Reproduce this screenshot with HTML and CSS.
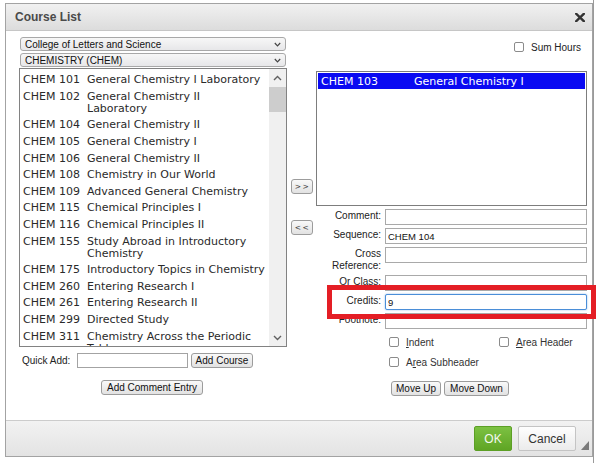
FILE: index.html
```html
<!DOCTYPE html>
<html>
<head>
<meta charset="utf-8">
<title>Course List</title>
<link rel="stylesheet" href="styles.css">
</head>
<body>
<div class="page">
  <div class="dialog">
    <div class="titlebar">
      <span class="title">Course List</span>
      <svg class="close" viewBox="0 0 10 9" width="10" height="9"><path d="M1.2 0.8 L8.8 8.2 M8.8 0.8 L1.2 8.2" stroke="#333" stroke-width="2.4" stroke-linecap="square"/></svg>
    </div>
    <div class="content">
      <div class="leftcol">
        <div class="select"><span>College of Letters and Science</span><svg class="chev" viewBox="0 0 7 5" width="7" height="5"><polyline points="0.8,1 3.5,3.8 6.2,1" fill="none" stroke="#444" stroke-width="1.2"/></svg></div>
        <div class="select"><span>CHEMISTRY (CHEM)</span><svg class="chev" viewBox="0 0 7 5" width="7" height="5"><polyline points="0.8,1 3.5,3.8 6.2,1" fill="none" stroke="#444" stroke-width="1.2"/></svg></div>
        <div class="listbox">
          <div class="items">
            <div class="item"><span class="code">CHEM 101</span><span class="name">General Chemistry I Laboratory</span></div>
            <div class="item"><span class="code">CHEM 102</span><span class="name">General Chemistry II<br>Laboratory</span></div>
            <div class="item"><span class="code">CHEM 104</span><span class="name">General Chemistry II</span></div>
            <div class="item"><span class="code">CHEM 105</span><span class="name">General Chemistry I</span></div>
            <div class="item"><span class="code">CHEM 106</span><span class="name">General Chemistry II</span></div>
            <div class="item"><span class="code">CHEM 108</span><span class="name">Chemistry in Our World</span></div>
            <div class="item"><span class="code">CHEM 109</span><span class="name">Advanced General Chemistry</span></div>
            <div class="item"><span class="code">CHEM 115</span><span class="name">Chemical Principles I</span></div>
            <div class="item"><span class="code">CHEM 116</span><span class="name">Chemical Principles II</span></div>
            <div class="item"><span class="code">CHEM 155</span><span class="name">Study Abroad in Introductory<br>Chemistry</span></div>
            <div class="item"><span class="code">CHEM 175</span><span class="name">Introductory Topics in Chemistry</span></div>
            <div class="item"><span class="code">CHEM 260</span><span class="name">Entering Research I</span></div>
            <div class="item"><span class="code">CHEM 261</span><span class="name">Entering Research II</span></div>
            <div class="item"><span class="code">CHEM 299</span><span class="name">Directed Study</span></div>
            <div class="item"><span class="code">CHEM 311</span><span class="name">Chemistry Across the Periodic<br>Table</span></div>
          </div>
          <div class="scrollbar">
            <div class="sb-btn"><svg viewBox="0 0 9 6" width="9" height="6"><polyline points="1,5 4.5,1.5 8,5" fill="none" stroke="#606060" stroke-width="1.4"/></svg></div>
            <div class="sb-thumb"></div>
            <div class="sb-space"></div>
            <div class="sb-btn"><svg viewBox="0 0 9 6" width="9" height="6"><polyline points="1,1 4.5,4.5 8,1" fill="none" stroke="#606060" stroke-width="1.4"/></svg></div>
          </div>
        </div>
        <div class="quickadd">
          <span class="qa-label">Quick Add:</span>
          <input class="qa-input" type="text">
          <button class="btn btn-addcourse">Add Course</button>
        </div>
        <button class="btn btn-comment">Add Comment Entry</button>
      </div>
      <div class="midcol">
        <button class="btn btn-move">&gt;&gt;</button>
        <button class="btn btn-move btn-back">&lt;&lt;</button>
      </div>
      <div class="rightcol">
        <div class="sumhours"><span class="box"></span><span>Sum Hours</span></div>
        <div class="rlist">
          <div class="ritem selected"><span class="rcode">CHEM 103</span><span>General Chemistry I</span></div>
        </div>
        <div class="form">
          <label class="lbl">Comment:</label><input class="inp" type="text">
          <label class="lbl">Sequence:</label><input class="inp" type="text" value="CHEM 104">
          <label class="lbl">Cross<br>Reference:</label><input class="inp" type="text">
          <label class="lbl">Or Class:</label><input class="inp" type="text">
          <label class="lbl">Credits:</label><input class="inp focus" type="text" value="9">
          <label class="lbl">Footnote:</label><input class="inp" type="text">
        </div>
        <div class="checks">
          <div class="chk"><span class="box"></span><span><u>I</u>ndent</span></div>
          <div class="chk"><span class="box"></span><span><u>A</u>rea Header</span></div>
          <div class="chk"><span class="box"></span><span>A<u>r</u>ea Subheader</span></div>
        </div>
        <div class="moves">
          <button class="btn btn-up">Move Up</button>
          <button class="btn btn-down">Move Down</button>
        </div>
      </div>
    </div>
    <div class="footer">
      <button class="ok">OK</button>
      <button class="cancel">Cancel</button>
      <span class="grip"></span>
    </div>
  </div>
  <div class="bg-edge"></div>
</div>
<div class="highlight"></div>
</body>
</html>
```

FILE: styles.css
```css
* { box-sizing: border-box; }
html, body { margin: 0; padding: 0; }
body {
  width: 598px; height: 463px; overflow: hidden; position: relative;
  background: #fff;
  font-family: "Liberation Sans", Arial, sans-serif; font-size: 10px; color: #222;
}
.page { display: flex; align-items: flex-start; padding: 3px 0 0 5px; height: 463px; }
.dialog {
  width: 588px; height: 454px; flex: none;
  border: 1px solid #a3a3a3; background: #fff;
  display: flex; flex-direction: column;
}
.bg-edge { width: 1px; align-self: stretch; background: #9a9a9a; margin-top: -3px; }

.titlebar {
  height: 27px; flex: none;
  border-bottom: 1px solid #c6c6c6;
  background: linear-gradient(#f1f1f1, #dcdcdc);
  display: flex; align-items: center; justify-content: space-between;
  padding: 0 7px 0 9px;
}
.title { font-size: 12px; font-weight: bold; color: #4a4a4a; }
.close { display: block; }

.content {
  flex: 1;
  display: grid; grid-template-columns: 268px 29px 271px;
  align-items: start;
  padding: 6px 4px 0 13px;
}

/* left column */
.leftcol { display: flex; flex-direction: column; align-items: flex-start; }
.select {
  width: 266px; height: 14px; margin-left: 1px;
  border: 1px solid #a8a8a8; border-radius: 3px;
  background: linear-gradient(#f7f7f7, #e7e7e9);
  display: flex; align-items: center; justify-content: space-between;
  padding: 0 4px 0 4px; font-size: 10px; color: #111;
}
.select + .select { margin-top: 2px; }
.chev { display: block; }
.listbox {
  margin-top: 1px; width: 268px; height: 279px;
  border: 1px solid #828282; display: flex;
}
.items {
  flex: 1; overflow: hidden; padding: 3px 0 0 3px;
  font-family: "DejaVu Sans", Verdana, sans-serif; font-size: 11px; color: #2a2a2a;
}
.item { display: flex; padding: 2.3px 0; line-height: 12px; white-space: nowrap; }
.code { width: 64px; flex: none; }
.scrollbar { width: 17px; flex: none; background: #f0f0f0; display: flex; flex-direction: column; }
.sb-btn { height: 17px; display: flex; align-items: center; justify-content: center; }
.sb-btn svg { display: block; }
.sb-thumb { height: 25px; margin: 1px 0 0; background: #cdcdcd; }
.sb-space { flex: 1; }

.btn {
  font-family: "Liberation Sans", Arial, sans-serif; font-size: 10px; color: #111;
  height: 15px; padding: 0; margin: 0;
  border: 1px solid #9c9c9c; border-radius: 3px;
  background: linear-gradient(#f9f9f9, #e2e2e2);
  display: inline-flex; align-items: center; justify-content: center;
  line-height: 1;
}
.quickadd { display: flex; align-items: center; margin-top: 6px; padding-left: 3px; height: 15px; }
.qa-label { width: 55px; }
.qa-input { width: 111px; height: 15px; border: 1px solid #a3a3a3; margin: 0; padding: 0 2px; font: 10px "Liberation Sans", Arial, sans-serif; }
.btn-addcourse { width: 62px; margin-left: 3px; }
.btn-comment { width: 102px; margin: 12px 0 0 82px; }

/* middle column */
.midcol { display: flex; flex-direction: column; align-items: flex-start; padding: 142px 0 0 4px; }
.btn-move { width: 22px; height: 15px; font-family: "DejaVu Sans", sans-serif; font-size: 7.5px; letter-spacing: 1.5px; color: #444; padding-left: 1px; }
.btn-back { margin-top: 26px; }

/* right column */
.rightcol { display: flex; flex-direction: column; }
.sumhours {
  display: flex; align-items: center; justify-content: flex-end; gap: 7px;
  height: 10px; margin-top: 5px; padding-right: 6px; font-size: 10px;
}
.box { width: 10px; height: 10px; flex: none; border: 1px solid #8b8b8b; border-radius: 2px; background: #fff; }
.rlist { margin-top: 19px; width: 271px; height: 135px; border: 1px solid #7d7d7d; padding: 1px; }
.ritem {
  display: flex; height: 16px; align-items: center; padding-left: 3px;
  font-family: "DejaVu Sans", Verdana, sans-serif; font-size: 11px; white-space: nowrap;
}
.selected { background: #0a0af2; color: #fff; }
.rcode { width: 93px; flex: none; }

.form {
  margin-top: 3px;
  display: grid; grid-template-columns: 65px 202px; column-gap: 4px; row-gap: 3px;
  align-items: start;
}
.lbl { text-align: right; line-height: 12px; padding-top: 1px; font-size: 10px; color: #222; }
.inp {
  height: 16px; width: 202px; margin: 0;
  border: 1px solid #a9a9a9; padding: 0 2px;
  font: 9.5px "Liberation Sans", Arial, sans-serif; color: #111; background: #fff;
}
.focus { border-color: #4a8ed8; border-radius: 2px; box-shadow: 0 0 2px #8cb8e8; outline: none; }

.checks {
  margin-top: 8px; padding-left: 73px;
  display: grid; grid-template-columns: 110px auto; row-gap: 10px;
}
.chk { display: flex; align-items: center; gap: 7px; height: 10px; font-size: 10px; color: #333; }
.chk u { text-decoration-thickness: 1px; text-underline-offset: 1px; }
.moves { display: flex; gap: 3px; margin-top: 14px; padding-left: 75px; }
.btn-up { width: 50px; }
.btn-down { width: 65px; }

/* footer */
.footer {
  height: 36px; flex: none; position: relative;
  border-top: 1px solid #cccccc;
  background: linear-gradient(#f2f2f2, #e3e3e3);
  display: flex; align-items: center; justify-content: flex-end; gap: 6px;
  padding: 0 16px 0 0;
}
.ok {
  width: 38px; height: 25px; margin: 0; padding: 0;
  border: 1px solid #5c9f25; border-radius: 2px;
  background: linear-gradient(#7cc142, #5fa524);
  color: #f4f9ef; font: 12px "Liberation Sans", Arial, sans-serif;
}
.cancel {
  width: 58px; height: 25px; margin: 0; padding: 0;
  border: 1px solid #c4c4c4; border-radius: 2px;
  background: linear-gradient(#fefefe, #ebebeb);
  color: #333; font: 12px "Liberation Sans", Arial, sans-serif;
}
.grip {
  position: absolute; right: 3px; bottom: 6px; width: 0; height: 0;
  border-left: 8px solid transparent; border-bottom: 9px solid #7a7a7a;
}

/* annotation overlay */
.highlight {
  position: absolute; left: 327px; top: 285px; width: 269px; height: 34px;
  border: 5px solid #e41e25;
}
```
